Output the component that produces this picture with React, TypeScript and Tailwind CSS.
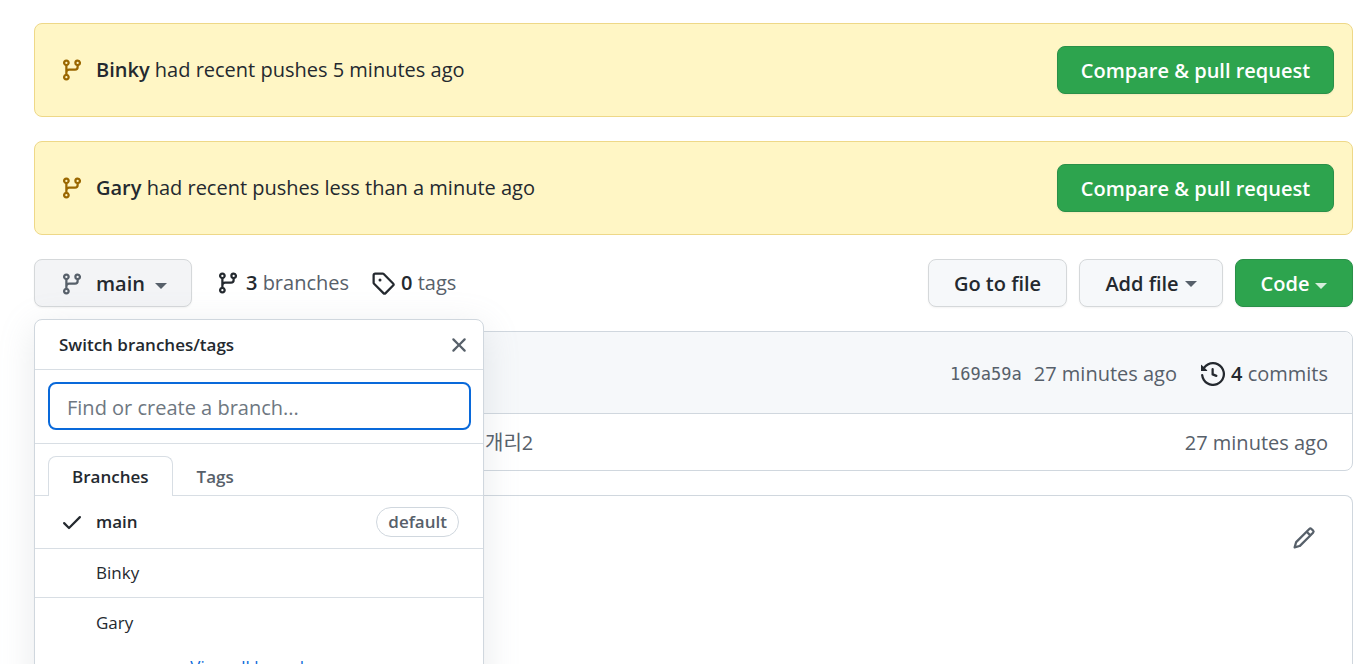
import React, { useState } from 'react';

// 16px grid icon outlines
const icons = {
  branch:
    'M11.75 2.5a.75.75 0 100 1.5.75.75 0 000-1.5zm-2.25.75a2.25 2.25 0 113 2.122V6A2.5 2.5 0 0110 8.5H6a1 1 0 00-1 1v1.128a2.251 2.251 0 11-1.5 0V5.372a2.25 2.25 0 111.5 0v1.836A2.492 2.492 0 016 7h4a1 1 0 001-1v-.628A2.25 2.25 0 019.5 3.25zM4.25 12a.75.75 0 100 1.5.75.75 0 000-1.5zM3.5 3.25a.75.75 0 111.5 0 .75.75 0 01-1.5 0z',
  tag: 'M2.5 7.775V2.75a.25.25 0 01.25-.25h5.025a.25.25 0 01.177.073l6.25 6.25a.25.25 0 010 .354l-5.025 5.025a.25.25 0 01-.354 0l-6.25-6.25a.25.25 0 01-.073-.177zm-1.5 0V2.75C1 1.784 1.784 1 2.75 1h5.025c.464 0 .91.184 1.238.513l6.25 6.25a1.75 1.75 0 010 2.474l-5.026 5.026a1.75 1.75 0 01-2.474 0l-6.25-6.25A1.75 1.75 0 011 7.775zM6 5a1 1 0 100 2 1 1 0 000-2z',
  history:
    'M1.643 3.143L.427 1.927A.25.25 0 000 2.104V5.75c0 .138.112.25.25.25h3.646a.25.25 0 00.177-.427L2.715 4.215a6.5 6.5 0 11-1.18 4.458.75.75 0 10-1.493.154 8.001 8.001 0 101.6-5.684zM7.75 4a.75.75 0 01.75.75v2.992l2.028.812a.75.75 0 01-.557 1.392l-2.5-1A.75.75 0 017 8.25v-3.5A.75.75 0 017.75 4z',
  x: 'M3.72 3.72a.75.75 0 011.06 0L8 6.94l3.22-3.22a.75.75 0 111.06 1.06L9.06 8l3.22 3.22a.75.75 0 11-1.06 1.06L8 9.06l-3.22 3.22a.75.75 0 01-1.06-1.06L6.94 8 3.72 4.78a.75.75 0 010-1.06z',
  check:
    'M13.78 4.22a.75.75 0 010 1.06l-7.25 7.25a.75.75 0 01-1.06 0L2.22 9.28a.75.75 0 011.06-1.06L6 10.94l6.72-6.72a.75.75 0 011.06 0z',
  pencil:
    'M11.013 1.427a1.75 1.75 0 012.474 0l1.086 1.086a1.75 1.75 0 010 2.474l-8.61 8.61c-.21.21-.47.364-.756.445l-3.251.93a.75.75 0 01-.927-.928l.929-3.25a1.75 1.75 0 01.445-.758l8.61-8.61zm1.414 1.06a.25.25 0 00-.354 0L10.811 3.75l1.439 1.44 1.263-1.263a.25.25 0 000-.354l-1.086-1.086zM11.189 6.25L9.75 4.81l-6.286 6.287a.25.25 0 00-.064.108l-.558 1.953 1.953-.558a.249.249 0 00.108-.064l6.286-6.286z',
};

function Icon({ name, className = '' }: { name: keyof typeof icons; className?: string }) {
  return (
    <svg viewBox="0 0 16 16" fill="currentColor" aria-hidden="true" className={`w-6 h-6 shrink-0 ${className}`}>
      <path fillRule="evenodd" d={icons[name]} />
    </svg>
  );
}

function Caret({ className = '' }: { className?: string }) {
  return (
    <span
      className={`inline-block border-x-[6px] border-t-[6px] border-x-transparent border-t-current ${className}`}
    />
  );
}

const pushes = [
  { branch: 'Binky', when: '5 minutes ago' },
  { branch: 'Gary', when: 'less than a minute ago' },
];

const branches = ['main', 'Binky', 'Gary'];

const greenButton =
  'h-12 pt-0.5 rounded-lg border border-[#2a9049] bg-[#2da44e] font-semibold text-white shadow-xs flex items-center justify-center';
const grayButton =
  'h-12 pt-0.5 rounded-lg border border-[#d5d8da] font-semibold shadow-xs flex items-center';

function BranchMenu() {
  const [tab, setTab] = useState('Branches');
  const [query, setQuery] = useState('');

  return (
    <div className="absolute top-[60px] left-0 z-10 w-[450px] rounded-lg border border-[#d0d7de] bg-white text-[17px] leading-6 shadow-[0_8px_36px_rgba(140,149,159,0.2)]">
      <div className="h-[50px] pl-6 pr-3 flex items-center justify-between border-b border-[#d8dee4]">
        <span className="font-semibold">Switch branches/tags</span>
        <button aria-label="Close menu" className="text-[#57606a]">
          <Icon name="x" />
        </button>
      </div>
      <div className="h-[74px] pt-3 pl-[13px] pr-3 border-b border-[#d8dee4]">
        <input
          type="text"
          aria-label="Find or create a branch"
          placeholder="Find or create a branch..."
          value={query}
          onChange={(e) => setQuery(e.target.value)}
          className="block w-full h-12 pt-0.5 rounded-lg border-2 border-[#0969da] px-[17px] text-[20px] outline-none placeholder:text-[#6e7781]"
        />
      </div>
      <div className="pt-3 pl-[13px] flex border-b border-[#d8dee4]">
        {['Branches', 'Tags'].map((name) => (
          <button
            key={name}
            onClick={() => setTab(name)}
            className={`h-10 -mb-px px-[23px] font-semibold rounded-t-lg border border-b-0 ${
              tab === name ? 'bg-white border-[#d8dee4]' : 'border-transparent text-[#57606a]'
            }`}
          >
            {name}
          </button>
        ))}
      </div>
      {branches.map((name) => (
        <button
          key={name}
          className={`w-full pl-[25px] pr-6 flex items-center text-left border-b border-[#d8dee4] last-of-type:border-b-0 ${
            name === 'main' ? 'h-[53px] font-semibold' : 'h-[49px]'
          }`}
        >
          <Icon name="check" className={name === 'main' ? 'mr-3' : 'mr-3 invisible'} />
          <span className="flex-1">{name}</span>
          {name === 'main' && (
            <span className="h-[30px] px-[11px] rounded-full border border-[#d0d7de] text-[#57606a] leading-7">
              default
            </span>
          )}
        </button>
      ))}
      <div className="pt-2 pb-3 text-center">
        <a href="#branches" className="text-[#0969da]">
          View all branches
        </a>
      </div>
    </div>
  );
}

export default function App() {
  return (
    <div className="h-screen overflow-hidden flex flex-col gap-6 pt-[23px] pl-[34px] pr-[7px] bg-white font-['Open_Sans','Noto_Sans_CJK_KR',sans-serif] text-[20px] leading-[30px] text-[#24292f]">
      {pushes.map((push) => (
        <div
          key={push.branch}
          className="h-[94px] shrink-0 pl-[25px] pr-[18px] flex items-center justify-between rounded-lg border border-[#eed888] bg-[#fff6c5]"
        >
          <div className="flex items-center">
            <Icon name="branch" className="mr-3 text-[#9a6700]" />
            <p>
              <strong className="font-semibold">{push.branch}</strong> had recent pushes {push.when}
            </p>
          </div>
          <button className={`${greenButton} w-[277px]`}>Compare &amp; pull request</button>
        </div>
      ))}

      <div className="relative flex items-center justify-between shrink-0">
        <div className="flex items-center">
          <button className={`${grayButton} w-[158px] mr-6 pl-[25px] bg-[#f3f4f6]`}>
            <Icon name="branch" className="mr-3 text-[#57606a]" />
            main
            <Caret className="ml-[10px] mt-1 text-[#57606a]" />
          </button>
          <a href="#branches" className="flex items-center mr-[22px]">
            <Icon name="branch" className="mr-[6px]" />
            <span className="text-[#57606a]">
              <strong className="font-semibold text-[#24292f]">3</strong> branches
            </span>
          </a>
          <a href="#tags" className="flex items-center">
            <Icon name="tag" className="mr-[6px]" />
            <span className="text-[#57606a]">
              <strong className="font-semibold text-[#24292f]">0</strong> tags
            </span>
          </a>
        </div>
        <div className="flex items-center gap-3">
          <button className={`${grayButton} w-[139px] justify-center bg-[#f6f8fa]`}>Go to file</button>
          <button className={`${grayButton} w-36 justify-center bg-[#f6f8fa]`}>
            Add file
            <Caret className="ml-[6px] text-[#57606a]" />
          </button>
          <button className={`${greenButton} w-[118px]`}>
            Code
            <Caret className="ml-[6px] mt-1 text-[#d5eddc]" />
          </button>
        </div>
        <BranchMenu />
      </div>

      <div className="shrink-0 rounded-lg border border-[#d0d7de] text-[#57606a]">
        <div className="h-[82px] pt-0.5 px-6 flex items-center justify-end rounded-t-lg border-b border-[#d0d7de] bg-[#f6f8fa]">
          <a href="#commit" className="mr-3 font-['DejaVu_Sans_Mono',monospace] text-[17px]">
            169a59a
          </a>
          <span className="mr-6">27 minutes ago</span>
          <a href="#commits" className="flex items-center">
            <Icon name="history" className="mr-[6px] text-[#24292f]" />
            <span>
              <strong className="font-semibold text-[#24292f]">4</strong> commits
            </span>
          </a>
        </div>
        <div className="h-14 pt-0.5 pr-6 pl-[450px] flex items-center justify-between">
          <a href="#message">개리2</a>
          <span>27 minutes ago</span>
        </div>
      </div>

      <div className="flex-1 pt-[30px] pr-9 flex items-start justify-end rounded-t-lg border border-b-0 border-[#d0d7de] text-[#57606a]">
        <button aria-label="Edit this file">
          <Icon name="pencil" />
        </button>
      </div>
    </div>
  );
}
